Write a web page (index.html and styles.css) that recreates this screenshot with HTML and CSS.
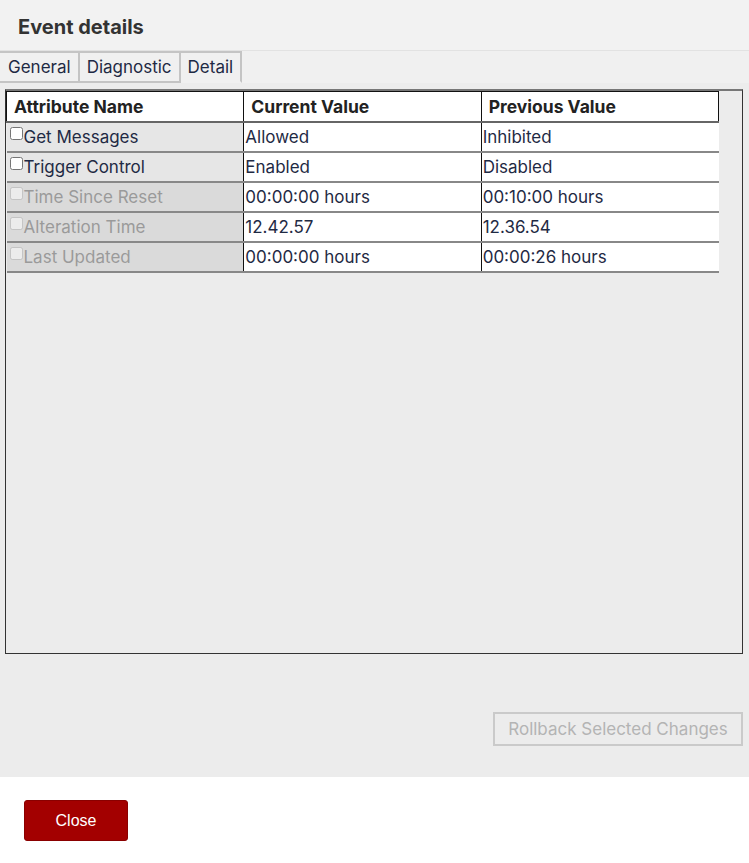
FILE: index.html
```
<!DOCTYPE html>
<html lang="en">
<head>
    <meta charset="UTF-8">
    <meta name="viewport" content="width=device-width, initial-scale=1.0">
    <title>Event details</title>
    <link rel="stylesheet" href="styles.css">
</head>
<body>
    <div class="dialog">
        <div class="dialog-header">
            <h2>Event details</h2>
        </div>

        <div class="dialog-body">
            <div class="tabs">
                <div class="tab">General</div>
                <div class="tab">Diagnostic</div>
                <div class="tab active">Detail</div>
            </div>

            <div class="panel">
                <table class="attr-table">
                    <thead>
                        <tr>
                            <th>Attribute Name</th>
                            <th>Current Value</th>
                            <th>Previous Value</th>
                        </tr>
                    </thead>
                    <tbody>
                        <tr>
                            <td class="name"><label><input type="checkbox">Get Messages</label></td>
                            <td>Allowed</td>
                            <td>Inhibited</td>
                        </tr>
                        <tr>
                            <td class="name"><label><input type="checkbox">Trigger Control</label></td>
                            <td>Enabled</td>
                            <td>Disabled</td>
                        </tr>
                        <tr class="locked">
                            <td class="name"><label><input type="checkbox" disabled>Time Since Reset</label></td>
                            <td>00:00:00 hours</td>
                            <td>00:10:00 hours</td>
                        </tr>
                        <tr class="locked">
                            <td class="name"><label><input type="checkbox" disabled>Alteration Time</label></td>
                            <td>12.42.57</td>
                            <td>12.36.54</td>
                        </tr>
                        <tr class="locked">
                            <td class="name"><label><input type="checkbox" disabled>Last Updated</label></td>
                            <td>00:00:00 hours</td>
                            <td>00:00:26 hours</td>
                        </tr>
                    </tbody>
                </table>
            </div>

            <div class="panel-actions">
                <button class="rollback-btn" disabled>Rollback Selected Changes</button>
            </div>
        </div>

        <div class="dialog-footer">
            <button class="close-btn">Close</button>
        </div>
    </div>
</body>
</html>
```

FILE: styles.css
```
body { margin: 0; font-family: 'Inter', 'Liberation Sans', sans-serif; color: #222; background: #fff; }
.dialog { width: 749px; height: 863px; display: flex; flex-direction: column; }

.dialog-header { height: 51px; box-sizing: border-box; padding: 4px 0 0 18px; background: #f2f2f2; border-bottom: 1px solid #e2e2e2; display: flex; align-items: center; }
.dialog-header h2 { margin: 0; font-size: 20px; font-weight: 700; color: #333; }

.dialog-body { height: 726px; background: #ececec; display: flex; flex-direction: column; }
.tabs { display: flex; height: 32px; background: #f0f0f0; }
.tab { height: 28px; padding: 0 7px; border: 2px solid #c4c4c4; border-left: none; display: flex; align-items: center; font-size: 17px; color: #1f2a44; }
.tab:first-child { padding-left: 8px; }
.tab.active { border-bottom-color: #f0f0f0; }

.panel { margin: 6px 6px 0 5px; height: 562px; background: #ececec; border: 1px solid #333; border-top: 2px solid #777; }
.attr-table { width: 713px; border-collapse: collapse; table-layout: fixed; font-size: 17px; }
.attr-table th, .attr-table td { height: 28px; padding: 0 0 0 1px; text-align: left; border-left: 1px solid #111; border-bottom: 2px solid #888; background: #fff; color: #1f2a44; }
.attr-table th { height: 29px; padding-left: 7px; font-size: 17.5px; font-weight: 700; color: #222; border-top: 1px solid #111; border-right: 1px solid #111; border-bottom: 2px solid #666; }
.attr-table td.name { background: #e6e6e6; padding-left: 0; border-left: none; }
.attr-table tr.locked td.name { background: #dadada; color: #9a9a9a; }
.attr-table label { display: flex; align-items: center; }
.attr-table input { width: 13px; height: 13px; margin: -7px 1px 0 3px; }

.panel-actions { display: flex; justify-content: flex-end; padding: 58px 6px 0 0; }
.rollback-btn { width: 250px; height: 34px; font-family: inherit; font-size: 17px; color: #b4b4b4; background: #ececec; border: 2px solid #cacaca; }

.dialog-footer { flex: 1; background: #fff; padding: 23px 0 0 24px; }
.close-btn { width: 104px; height: 41px; background: #a30000; color: #fff; border: 1px solid #8a0000; border-radius: 3px; font-family: 'Liberation Sans', Arial, sans-serif; font-size: 16px; }
```
